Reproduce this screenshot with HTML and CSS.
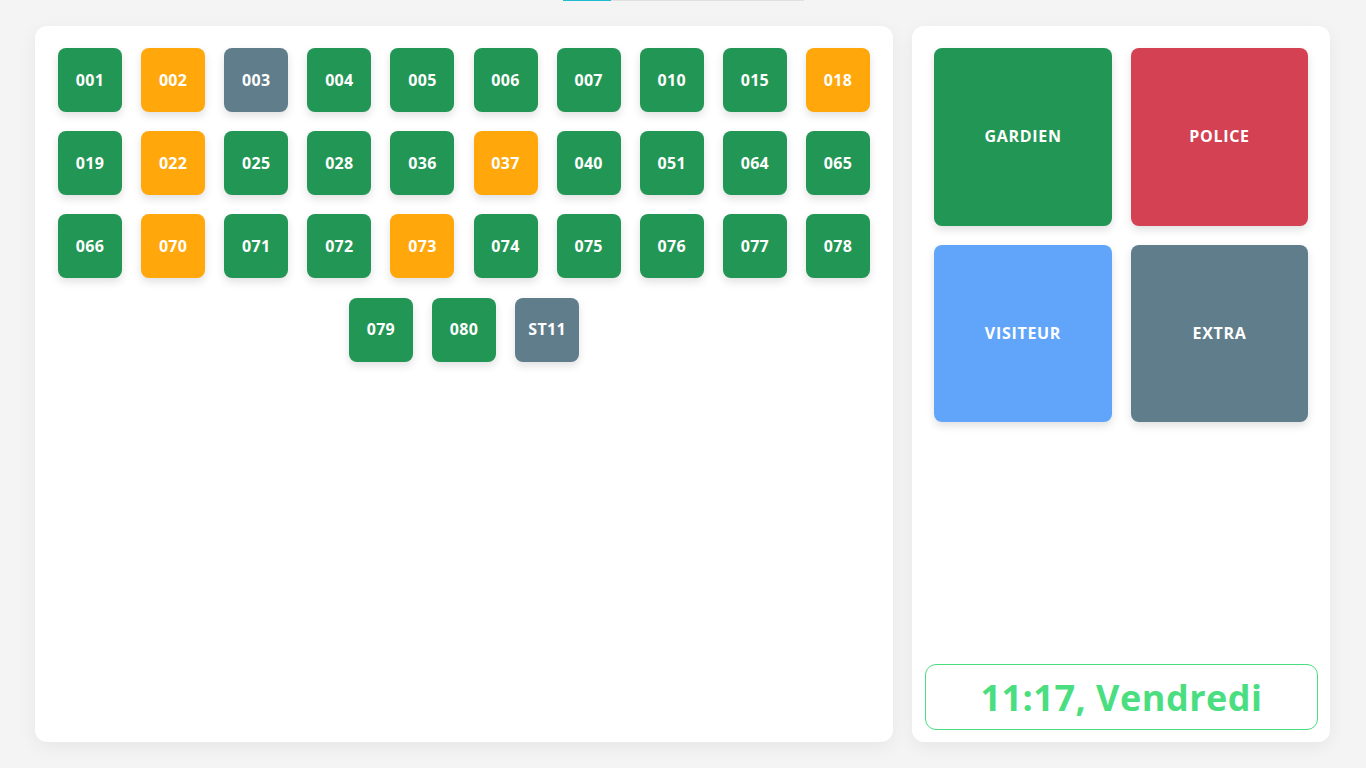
FILE: index.html
```html
<!DOCTYPE html>
<html lang="fr">
<head>
<meta charset="utf-8">
<title>Interphone</title>
<link rel="stylesheet" href="styles.css">
</head>
<body>
<div class="progress"><div class="progress-fill"></div></div>
<main class="layout">
  <section class="panel apartments">
    <div class="tile green">001</div>
    <div class="tile orange">002</div>
    <div class="tile gray">003</div>
    <div class="tile green">004</div>
    <div class="tile green">005</div>
    <div class="tile green">006</div>
    <div class="tile green">007</div>
    <div class="tile green">010</div>
    <div class="tile green">015</div>
    <div class="tile orange">018</div>
    <div class="tile green">019</div>
    <div class="tile orange">022</div>
    <div class="tile green">025</div>
    <div class="tile green">028</div>
    <div class="tile green">036</div>
    <div class="tile orange">037</div>
    <div class="tile green">040</div>
    <div class="tile green">051</div>
    <div class="tile green">064</div>
    <div class="tile green">065</div>
    <div class="tile green">066</div>
    <div class="tile orange">070</div>
    <div class="tile green">071</div>
    <div class="tile green">072</div>
    <div class="tile orange">073</div>
    <div class="tile green">074</div>
    <div class="tile green">075</div>
    <div class="tile green">076</div>
    <div class="tile green">077</div>
    <div class="tile green">078</div>
    <div class="tile green">079</div>
    <div class="tile green">080</div>
    <div class="tile gray">ST11</div>
  </section>
  <aside class="panel side">
    <div class="actions">
      <div class="action green">GARDIEN</div>
      <div class="action red">POLICE</div>
      <div class="action blue">VISITEUR</div>
      <div class="action gray">EXTRA</div>
    </div>
    <div class="clock">11:17, Vendredi</div>
  </aside>
</main>
</body>
</html>
```

FILE: styles.css
```css
* { box-sizing: border-box; }
html, body { margin: 0; padding: 0; }
body {
  background: #f4f4f4;
  font-family: "Open Sans", "DejaVu Sans", sans-serif;
  font-weight: 700;
  color: #fff;
  width: 1366px;
  height: 768px;
  overflow: hidden;
}
.progress {
  width: 241px;
  height: 1px;
  margin: 0 auto;
  background: #e0e0e0;
}
.progress-fill {
  width: 48px;
  height: 100%;
  background: #1fbcd2;
}
.layout {
  display: flex;
  gap: 19px;
  padding: 25px 36px 0 35px;
}
.panel {
  background: #fff;
  border-radius: 12px;
  box-shadow: 0 5px 18px rgba(0,0,0,0.06);
  height: 716px;
}
.apartments {
  width: 858px;
  padding: 22px 23px;
  display: flex;
  flex-wrap: wrap;
  justify-content: center;
  align-content: flex-start;
  gap: 19.2px 19.11px;
}
.tile {
  width: 64px;
  height: 64px;
  border-radius: 8px;
  display: flex;
  align-items: center;
  justify-content: center;
  font-size: 16px;
  letter-spacing: 0.3px;
  padding-bottom: 1px;
  box-shadow: 0 4px 8px rgba(0,0,0,0.12);
}
.green { background: #229654; }
.orange { background: #ffa70b; }
.gray { background: #607d8b; }
.red { background: #d34152; }
.blue { background: #60a5fa; }
.side {
  width: 418px;
  padding: 22px 12px 12px 13px;
  display: flex;
  flex-direction: column;
  justify-content: space-between;
}
.actions {
  display: grid;
  grid-template-columns: 178px 177px;
  grid-template-rows: 178px 177px;
  gap: 19px;
  padding: 0 9px;
}
.action {
  border-radius: 8px;
  display: flex;
  align-items: center;
  justify-content: center;
  font-size: 16px;
  letter-spacing: 0.7px;
  padding-bottom: 2px;
  box-shadow: 0 4px 8px rgba(0,0,0,0.12);
}
.clock {
  height: 66px;
  border: 1px solid #4ade80;
  border-radius: 11px;
  color: #4ade80;
  font-size: 36px;
  letter-spacing: 0.5px;
  display: flex;
  align-items: center;
  justify-content: center;
}
```
